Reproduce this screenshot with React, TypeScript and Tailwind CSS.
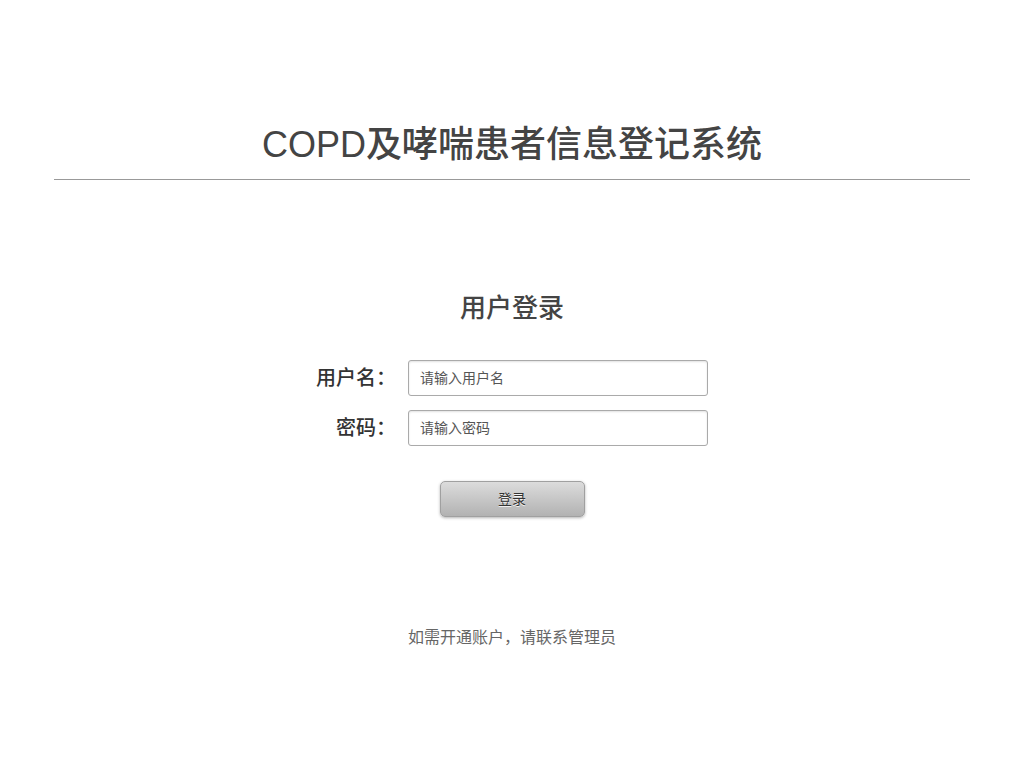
import React from 'react';

const font = { fontFamily: '"Liberation Sans", "Noto Sans CJK SC", sans-serif' };

export default function App() {
  return (
    <div className="min-h-screen bg-white text-[#444]" style={font}>
      <header className="pt-[124px] mx-[54px]">
        <h1 className="text-center text-[36px] leading-[42px] font-medium text-[#444]">COPD及哮喘患者信息登记系统</h1>
        <div className="mt-[13px] border-b border-[#999]"></div>
      </header>

      <main className="flex flex-col items-center">
        <h2 className="mt-[111px] text-[26px] leading-[34px] font-medium text-[#444]">用户登录</h2>

        <form className="mt-[35px] flex flex-col gap-[14px]" onSubmit={(e) => e.preventDefault()}>
          <div className="flex items-center gap-[12px]">
            <label className="w-[80px] text-right text-[20px] leading-[36px] font-medium text-[#333]">用户名：</label>
            <input
              className="w-[300px] h-[36px] px-[11px] text-[14px] border border-[#aaa] rounded-[3px] shadow-[inset_0_1px_2px_rgba(0,0,0,0.12)] placeholder:text-[#555] outline-none"
              placeholder="请输入用户名"
            />
          </div>
          <div className="flex items-center gap-[12px]">
            <label className="w-[80px] text-right text-[20px] leading-[36px] font-medium text-[#333]">密码：</label>
            <input
              type="password"
              className="w-[300px] h-[36px] px-[11px] text-[14px] border border-[#aaa] rounded-[3px] shadow-[inset_0_1px_2px_rgba(0,0,0,0.12)] placeholder:text-[#555] outline-none"
              placeholder="请输入密码"
            />
          </div>
          <div className="flex justify-center mt-[21px]">
            <button
              type="submit"
              className="w-[145px] h-[36px] text-[14px] text-[#333] rounded-[5px] border border-[#a0a0a0] bg-gradient-to-b from-[#dcdcdc] to-[#b2b2b2] shadow-[0_1px_3px_rgba(0,0,0,0.3)] [text-shadow:0_1px_0_rgba(255,255,255,0.8)]"
            >
              登录
            </button>
          </div>
        </form>

        <p className="mt-[109px] text-[16px] leading-[24px] text-[#666]">如需开通账户，请联系管理员</p>
      </main>
    </div>
  );
}
